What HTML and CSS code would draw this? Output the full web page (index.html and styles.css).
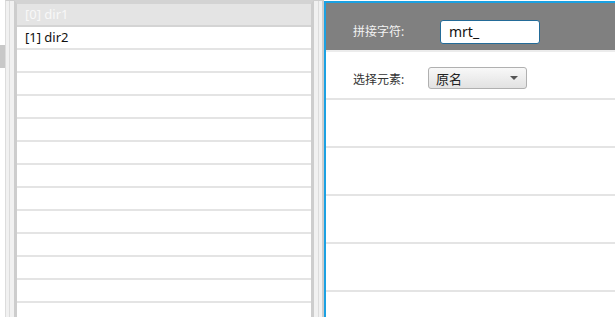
FILE: index.html
```html
<!DOCTYPE html>
<html lang="zh">
<head>
  <meta charset="UTF-8" />
  <title>重命名</title>
  <link rel="stylesheet" href="styles.css">
</head>
<body>
  <div class="app">
    <div class="side-strip">
      <div class="side-selected"></div>
    </div>
    <div class="splitter"><span></span></div>

    <div class="list">
      <div class="row row-head">[0] dir1</div>
      <div class="row">[1] dir2</div>
      <div class="row"></div>
      <div class="row"></div>
      <div class="row"></div>
      <div class="row"></div>
      <div class="row"></div>
      <div class="row"></div>
      <div class="row"></div>
      <div class="row"></div>
      <div class="row"></div>
      <div class="row"></div>
      <div class="row"></div>
      <div class="row"></div>
    </div>

    <div class="splitter splitter-right"><span></span></div>

    <div class="panel">
      <div class="opt opt-head">
        <label class="opt-label label-join">拼接字符:</label>
        <div class="text-box">mrt_</div>
      </div>
      <div class="opt">
        <label class="opt-label label-pick">选择元素:</label>
        <div class="combo">
          <span>原名</span>
          <span class="combo-arrow"></span>
        </div>
      </div>
      <div class="opt"></div>
      <div class="opt"></div>
      <div class="opt"></div>
      <div class="opt"></div>
    </div>
  </div>
</body>
</html>
```

FILE: styles.css
```css
body {
  margin: 0;
  width: 615px;
  height: 317px;
  overflow: hidden;
  background: #fff;
  font-family: "Noto Sans", "Noto Sans CJK SC", sans-serif;
  font-size: 13px;
}

.app {
  display: flex;
  height: 317px;
}

.side-strip {
  width: 5px;
  padding-top: 45px;
  background: #fff;
}

.side-selected {
  height: 23px;
  background: #c8c8c8;
}

.splitter {
  display: flex;
  width: 9px;
  padding-left: 3px;
  box-sizing: border-box;
  background: #f1f1f1;
  border-left: 1px solid #dcdcdc;
  border-top: 1px solid #cfcfcf;
}

.splitter span {
  width: 1px;
  background: #dcdcdc;
}

.splitter-right {
  width: 10px;
  padding-left: 4px;
  border-left: none;
  border-right: 2px solid #cdcdcd;
}

.list {
  width: 294px;
  border: 3px solid #cdcdcd;
  border-top: 4px solid #d3d3d3;
  border-bottom: none;
  background: #fff;
}

.row {
  height: 21px;
  line-height: 21px;
  padding-left: 8px;
  border-bottom: 2px solid #e4e4e4;
  color: #111;
}

.row-head {
  background: #e4e4e4;
  color: #f8f8f8;
  border-bottom-color: #d4d4d4;
}

.panel {
  flex: 1;
  margin-top: 1px;
  border-left: 2px solid #1ba1e2;
  border-top: 2px solid #1ba1e2;
  background: #fff;
}

.opt {
  display: flex;
  align-items: flex-start;
  height: 48px;
  box-sizing: border-box;
  padding: 15px 0 0 27px;
  border-bottom: 2px solid #e4e4e4;
}

.opt-head {
  height: 49px;
  padding-top: 17px;
  background: #808080;
  border-bottom-color: #ececec;
}

.opt-label {
  font-size: 12px;
  color: #333;
  line-height: 24px;
}

.opt-head .opt-label {
  color: #f2f2f2;
}

.label-join {
  width: 87px;
}

.label-pick {
  width: 75px;
  line-height: 25px;
}

.text-box {
  width: 100px;
  height: 24px;
  line-height: 22px;
  padding-left: 8px;
  box-sizing: border-box;
  background: #fff;
  border: 1px solid #236b98;
  border-radius: 3px;
  font-size: 14px;
  color: #111;
}

.combo {
  display: flex;
  align-items: center;
  justify-content: space-between;
  width: 99px;
  height: 22px;
  box-sizing: border-box;
  padding: 0 8px 0 7px;
  border: 1px solid #b0b0b0;
  border-radius: 3px;
  background: linear-gradient(#f8f8f8, #e2e2e2);
  color: #222;
  font-size: 13px;
}

.combo-arrow {
  width: 0;
  height: 0;
  border-left: 4px solid transparent;
  border-right: 4px solid transparent;
  border-top: 4px solid #555;
}
```
